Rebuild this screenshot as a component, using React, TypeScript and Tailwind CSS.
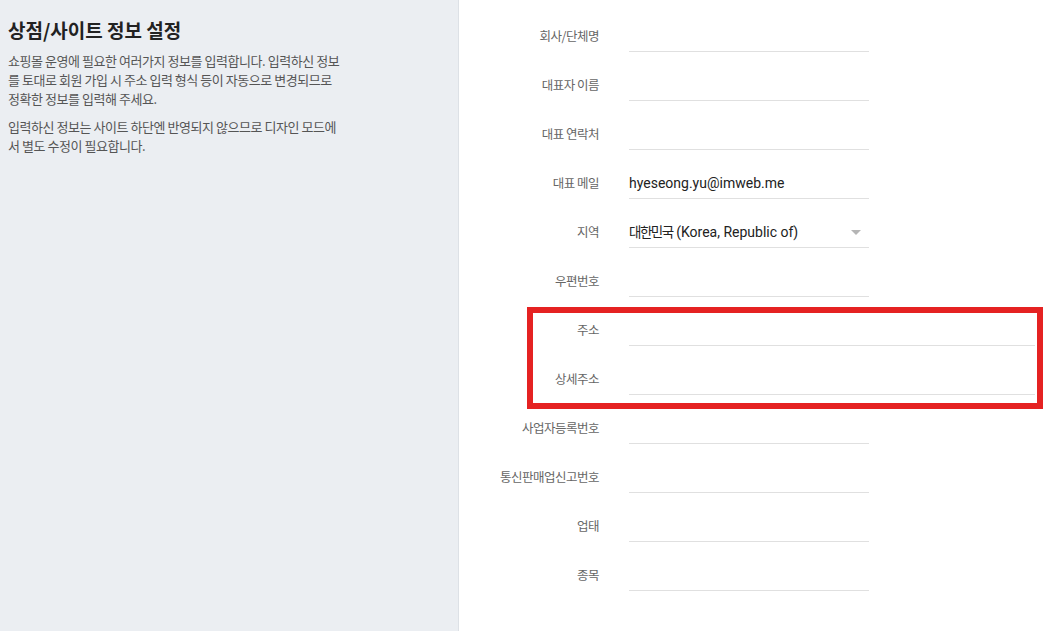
import React from "react";

const font = { fontFamily: '"Noto Sans CJK KR", "Noto Sans", sans-serif' };

type Row = { label: string; value?: React.ReactNode; select?: boolean; wide?: boolean };

const rows: Row[] = [
  { label: "회사/단체명" },
  { label: "대표자 이름" },
  { label: "대표 연락처" },
  { label: "대표 메일", value: "hyeseong.yu@imweb.me" },
  {
    label: "지역",
    value: (
      <>
        <span className="text-[13.5px] tracking-[-1.5px]">대한민국</span> (Korea, Republic of)
      </>
    ),
    select: true,
  },
  { label: "우편번호" },
  { label: "주소", wide: true },
  { label: "상세주소", wide: true },
  { label: "사업자등록번호" },
  { label: "통신판매업신고번호" },
  { label: "업태" },
  { label: "종목" },
];

function FieldRow({ r }: { r: Row }) {
  return (
    <div className="flex items-end h-[31px]">
      <div className="w-[140px] shrink-0 text-right text-[12.5px] tracking-[-0.5px] text-[#666] leading-[30px] pb-[1px]">
        {r.label}
      </div>
      <div
        className={
          "ml-[30px] h-[31px] border-b border-[#e0e0e0] flex items-center relative " +
          (r.wide ? "w-[406px]" : "w-[240px]")
        }
      >
        {r.value && (
          <span
            className="text-[14px] text-[#222] leading-[20px]"
            style={{ fontFamily: 'Roboto, "Noto Sans CJK KR", sans-serif' }}
          >
            {r.value}
          </span>
        )}
        {r.select && (
          <svg
            className="absolute right-[8px] top-[13px]"
            width="10"
            height="6"
            viewBox="0 0 10 6"
          >
            <path d="M0 0 L10 0 L5 5 Z" fill="#b5b5b5" />
          </svg>
        )}
      </div>
    </div>
  );
}

export default function App() {
  return (
    <div className="flex w-[1057px] h-[631px] bg-white overflow-hidden" style={font}>
      <div className="w-[459px] shrink-0 bg-[#ebeef2] border-r border-[#dde1e6] pl-[8px] pt-[17px]">
        <h1 className="text-[19px] font-semibold text-[#222] leading-[26px]">상점/사이트 정보 설정</h1>
        <p className="mt-[8px] text-[13px] leading-[19px] tracking-[-0.45px] text-[#555] whitespace-nowrap">
          쇼핑몰 운영에 필요한 여러가지 정보를 입력합니다. 입력하신 정보
          <br />를 토대로 회원 가입 시 주소 입력 형식 등이 자동으로 변경되므로
          <br />정확한 정보를 입력해 주세요.
        </p>
        <p className="mt-[9px] text-[13px] leading-[19px] tracking-[-0.45px] text-[#555] whitespace-nowrap">
          입력하신 정보는 사이트 하단엔 반영되지 않으므로 디자인 모드에
          <br />서 별도 수정이 필요합니다.
        </p>
      </div>
      <div className="flex-1 pt-[21px] relative">
        <div className="flex flex-col gap-[18px]">
          {rows.map((r) => (
            <FieldRow key={r.label} r={r} />
          ))}
        </div>
        <div className="absolute left-[68px] top-[307px] w-[516px] h-[102px] border-[6px] border-[#e52222] pointer-events-none" />
      </div>
    </div>
  );
}
